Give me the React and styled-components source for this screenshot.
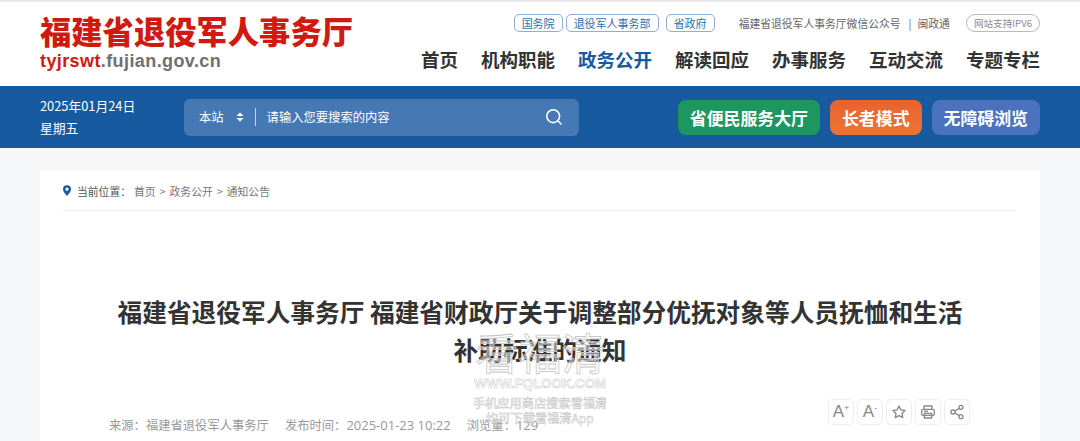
import React from "react";
import styled, { createGlobalStyle } from "styled-components";

const cjk = `"Noto Sans CJK SC", "Noto Sans", sans-serif`;

const GlobalStyle = createGlobalStyle`
  html, body {
    margin: 0;
    padding: 0;
    background: #f6f7f8;
    font-family: "Open Sans", ${cjk};
  }
  * { box-sizing: border-box; }
`;

const Page = styled.div`
  position: relative;
  width: 1080px;
  height: 441px;
  overflow: hidden;
  border-top: 2px solid #e8e8e8;
`;

const Header = styled.header`
  height: 84px;
  background: #fff;
  padding: 0 40px;
  display: flex;
  justify-content: space-between;
`;

const Logo = styled.div`
  display: flex;
  flex-direction: column;
  padding-top: 10px;
`;

const LogoTitle = styled.div`
  font-family: ${cjk};
  font-size: 31.3px;
  line-height: 37px;
  font-weight: 900;
  color: #d0190f;
  white-space: nowrap;
`;

const LogoUrl = styled.div`
  font-family: "Liberation Sans", sans-serif;
  font-size: 18px;
  line-height: 24px;
  font-weight: 700;
  letter-spacing: 0.4px;
  color: #707070;
  span { color: #d0190f; }
`;

const HeaderRight = styled.div`
  display: flex;
  flex-direction: column;
  align-items: flex-end;
`;

const TopLinks = styled.div`
  display: flex;
  align-items: center;
  height: 18px;
  margin-top: 12px;
`;

const TagLink = styled.a`
  height: 18px;
  padding: 0 7px;
  margin-right: ${(p) => p.$gap}px;
  display: flex;
  align-items: center;
  border: 1px solid #8fb0d6;
  border-radius: 5px;
  font-family: ${cjk};
  font-size: 11px;
  color: #2f6fae;
  white-space: nowrap;
`;

const TopText = styled.span`
  margin-left: ${(p) => p.$gap}px;
  font-family: ${cjk};
  font-size: 10.8px;
  color: #666;
  white-space: nowrap;
`;

const Ipv6 = styled.span`
  height: 18px;
  margin-left: 16px;
  padding: 0 7px;
  display: flex;
  align-items: center;
  border: 1px solid #b9b9b9;
  border-radius: 9px;
  font-family: ${cjk};
  font-size: 9.6px;
  color: #8c8c8c;
  white-space: nowrap;
`;

const Nav = styled.nav`
  display: flex;
  gap: 23px;
  margin-top: 14px;
`;

const NavItem = styled.a`
  font-family: ${cjk};
  font-size: 18.5px;
  line-height: 26px;
  font-weight: 700;
  color: ${(p) => (p.$active ? "#175aa0" : "#333")};
  white-space: nowrap;
`;

const Band = styled.div`
  height: 62px;
  background: #175aa0;
  padding: 0 40px;
  display: flex;
  align-items: center;
`;

const DateBox = styled.div`
  width: 144px;
  font-family: ${cjk};
  font-size: 12.8px;
  line-height: 22px;
  color: #fff;
`;

const Search = styled.div`
  width: 395px;
  height: 37px;
  padding: 0 16px 0 15px;
  border-radius: 6px;
  background: #4679b4;
  display: flex;
  align-items: center;
  font-family: ${cjk};
  font-size: 12.3px;
  color: #fff;
`;

const Scope = styled.span`
  white-space: nowrap;
`;

const Arrows = styled.svg`
  width: 8px;
  height: 10px;
  margin-left: 12px;
`;

const SearchDivider = styled.i`
  width: 1px;
  height: 18px;
  margin: 0 11px 0 11px;
  background: #c5d5e8;
`;

const Placeholder = styled.span`
  flex: 1;
  white-space: nowrap;
`;

const ButtonGroup = styled.div`
  display: flex;
  gap: 10px;
  margin-left: auto;
`;

const BandButton = styled.a`
  height: 35px;
  padding: 0 12px;
  display: flex;
  align-items: center;
  border-radius: 8px;
  background: ${(p) => p.$bg};
  font-family: ${cjk};
  font-size: 16.9px;
  font-weight: 700;
  color: #fff;
  white-space: nowrap;
`;

const Main = styled.main`
  padding: 23px 40px 0;
`;

const Card = styled.article`
  height: 300px;
  padding: 0 23px;
  background: #fff;
`;

const Crumbs = styled.div`
  height: 40px;
  display: flex;
  align-items: center;
  border-bottom: 1px solid #f1f1f1;
  font-family: ${cjk};
  font-size: 10.8px;
  color: #777;
`;

const Pin = styled.svg`
  width: 8px;
  height: 11px;
  margin-right: 6px;
`;

const CrumbLabel = styled.span`
  color: #555;
  margin-right: 3px;
`;

const CrumbSep = styled.span`
  margin: 0 4px;
`;

const Title = styled.h1`
  margin: 81px 0 0;
  font-family: ${cjk};
  font-size: 24.7px;
  line-height: 38px;
  font-weight: 700;
  color: #333;
  text-align: center;
`;

const MetaRow = styled.div`
  margin: 31px 0 0 46px;
  height: 26px;
  display: flex;
  align-items: flex-start;
  font-family: ${cjk};
  font-size: 12.3px;
  color: #999;
  white-space: nowrap;
`;

const MetaItem = styled.span`
  margin: 17px 16px 0 0;
  line-height: 18px;
`;

const MetaNum = styled.span`
  font-family: "Open Sans", sans-serif;
  font-size: 13px;
`;

const Tools = styled.div`
  display: flex;
  gap: 3px;
  margin-left: auto;
  margin-right: 47px;
`;

const ToolButton = styled.button`
  width: 26px;
  height: 26px;
  padding: 0;
  display: flex;
  align-items: center;
  justify-content: center;
  border: 1px solid #ededed;
  border-radius: 5px;
  background: #fff;
  color: #888;
  font-family: "Liberation Sans", sans-serif;
  font-size: 17px;
  svg { display: block; }
  sup { font-size: 9px; line-height: 1; margin-top: -8px; }
`;

const Watermark = styled.div`
  position: absolute;
  left: 440px;
  top: 324px;
  width: 200px;
  text-align: center;
  font-family: ${cjk};
  color: rgba(255, 255, 255, 0.45);
  -webkit-text-stroke: 0.8px #c6c6c6;
  pointer-events: none;
`;

const MarkName = styled.div`
  font-size: 43px;
  line-height: 50px;
  font-weight: 400;
  white-space: nowrap;
`;

const MarkUrl = styled.div`
  font-family: "Liberation Sans", sans-serif;
  font-size: 13.3px;
  line-height: 16px;
  font-weight: 700;
  -webkit-text-stroke-width: 0.5px;
`;

const MarkLine = styled.div`
  font-size: 12.2px;
  line-height: 15px;
  margin-top: ${(p) => p.$top || 0}px;
  -webkit-text-stroke-width: 0.5px;
`;

const navItems = ["首页", "机构职能", "政务公开", "解读回应", "办事服务", "互动交流", "专题专栏"];

export default function App() {
  return (
    <Page>
      <GlobalStyle />
      <Header>
        <Logo>
          <LogoTitle>福建省退役军人事务厅</LogoTitle>
          <LogoUrl><span>tyjrswt</span>.fujian.gov.cn</LogoUrl>
        </Logo>
        <HeaderRight>
          <TopLinks>
            <TagLink $gap={3}>国务院</TagLink>
            <TagLink $gap={7}>退役军人事务部</TagLink>
            <TagLink $gap={4}>省政府</TagLink>
            <TopText $gap={20}>福建省退役军人事务厅微信公众号</TopText>
            <TopText $gap={8}>|</TopText>
            <TopText $gap={6}>闽政通</TopText>
            <Ipv6>网站支持IPV6</Ipv6>
          </TopLinks>
          <Nav>
            {navItems.map((item) => (
              <NavItem key={item} $active={item === "政务公开"}>{item}</NavItem>
            ))}
          </Nav>
        </HeaderRight>
      </Header>

      <Band>
        <DateBox>
          <div>2025年01月24日</div>
          <div>星期五</div>
        </DateBox>
        <Search>
          <Scope>本站</Scope>
          <Arrows viewBox="0 0 8 10">
            <path d="M4 0.5 7.5 4H0.5zM4 9.5 0.5 6h7z" fill="#fff" />
          </Arrows>
          <SearchDivider />
          <Placeholder>请输入您要搜索的内容</Placeholder>
          <svg width="18" height="18" viewBox="0 0 18 18" fill="none" stroke="#fff" strokeWidth="1.6" strokeLinecap="round">
            <circle cx="8.2" cy="8.2" r="6.4" />
            <path d="M13 13l3 3" />
          </svg>
        </Search>
        <ButtonGroup>
          <BandButton $bg="#1e965f">省便民服务大厅</BandButton>
          <BandButton $bg="linear-gradient(#e8622f, #ec7434)">长者模式</BandButton>
          <BandButton $bg="#4a72bd">无障碍浏览</BandButton>
        </ButtonGroup>
      </Band>

      <Main>
        <Card>
          <Crumbs>
            <Pin viewBox="0 0 9 12">
              <path fillRule="evenodd" d="M4.5 0A4.5 4.5 0 0 0 0 4.5C0 7.5 4.5 12 4.5 12S9 7.5 9 4.5A4.5 4.5 0 0 0 4.5 0zm0 2.7a1.8 1.8 0 1 1 0 3.6 1.8 1.8 0 0 1 0-3.6z" fill="#175aa0" />
            </Pin>
            <CrumbLabel>当前位置：</CrumbLabel>
            <span>首页</span>
            <CrumbSep>&gt;</CrumbSep>
            <span>政务公开</span>
            <CrumbSep>&gt;</CrumbSep>
            <span>通知公告</span>
          </Crumbs>
          <Title>
            福建省退役军人事务厅 福建省财政厅关于调整部分优抚对象等人员抚恤和生活
            <br />
            补助标准的通知
          </Title>
          <MetaRow>
            <MetaItem>来源：福建省退役军人事务厅</MetaItem>
            <MetaItem>发布时间：<MetaNum>2025-01-23 10:22</MetaNum></MetaItem>
            <MetaItem>浏览量：<MetaNum>129</MetaNum></MetaItem>
            <Tools>
              <ToolButton>A<sup>+</sup></ToolButton>
              <ToolButton>A<sup>-</sup></ToolButton>
              <ToolButton>
                <svg width="16" height="16" viewBox="0 0 24 24" fill="none" stroke="currentColor" strokeWidth="2" strokeLinejoin="round">
                  <path d="M12 3l2.8 5.8 6.2.9-4.5 4.4 1.1 6.3L12 17.4 6.4 20.4l1.1-6.3L3 9.7l6.2-.9z" />
                </svg>
              </ToolButton>
              <ToolButton>
                <svg width="16" height="16" viewBox="0 0 24 24" fill="none" stroke="currentColor" strokeWidth="2" strokeLinejoin="round">
                  <path d="M6 8V3h12v5" />
                  <rect x="2.5" y="8" width="19" height="9" rx="2" />
                  <rect x="6.5" y="14" width="11" height="7" />
                  <path d="M6 11h6" />
                </svg>
              </ToolButton>
              <ToolButton>
                <svg width="16" height="16" viewBox="0 0 24 24" fill="none" stroke="currentColor" strokeWidth="2">
                  <circle cx="18" cy="5" r="3" />
                  <circle cx="6" cy="12" r="3" />
                  <circle cx="18" cy="19" r="3" />
                  <path d="M8.6 10.5l6.8-4M8.6 13.5l6.8 4" />
                </svg>
              </ToolButton>
            </Tools>
          </MetaRow>
        </Card>
      </Main>

      <Watermark>
        <MarkName>看福清</MarkName>
        <MarkUrl>WWW.FQLOOK.COM</MarkUrl>
        <MarkLine $top={4}>手机应用商店搜索看福清</MarkLine>
        <MarkLine>均可下载看福清App</MarkLine>
      </Watermark>
    </Page>
  );
}
